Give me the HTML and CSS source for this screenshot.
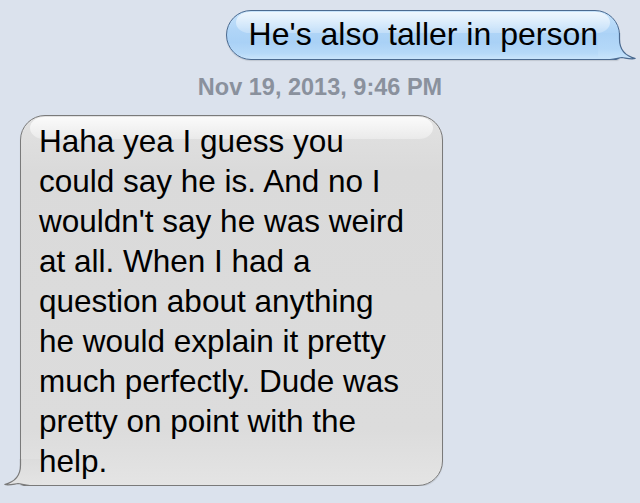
FILE: index.html
```html
<!DOCTYPE html>
<html>
<head>
    <title>Messages</title>
    <link rel="stylesheet" href="styles.css">
</head>
<body>

    <div class="thread">

        <div class="row row-out">
            <div class="bubble bubble-out">He's also taller in person<svg class="tail" width="40" height="28" viewBox="0 0 40 28">
                    <defs>
                        <linearGradient id="tailBlue" x1="0" y1="0" x2="0" y2="1">
                            <stop offset="0" stop-color="#abd2f6"/>
                            <stop offset="0.6" stop-color="#b4d8f8"/>
                            <stop offset="1" stop-color="#c9e4fb"/>
                        </linearGradient>
                    </defs>
                    <path class="tail-fill" fill="url(#tailBlue)" d="M0 0 H21.5 V6 C21.5 16 27 23 37.5 25.5 C32 26.5 28 25 24 24.5 C20 25 17 26.5 12 26.5 H0 Z"/>
                    <path class="tail-line" d="M21.5 0 V6 C21.5 16 27 23 37.5 25.5 C32 26.5 28 25 24 24.5 C20 25 17 26.5 12 26.5 H0"/>
                </svg></div>
        </div>

        <div class="stamp">Nov 19, 2013, 9:46 PM</div>

        <div class="row row-in">
            <div class="bubble bubble-in">Haha yea I guess you could say he is. And no I wouldn't say he was weird at all. When I had a question about anything he would explain it pretty much perfectly. Dude was pretty on point with the help.<svg class="tail" width="40" height="28" viewBox="0 0 40 28">
                    <defs>
                        <linearGradient id="tailGray" x1="0" y1="0" x2="0" y2="1">
                            <stop offset="0" stop-color="#dcdcdc"/>
                            <stop offset="1" stop-color="#e4e4e4"/>
                        </linearGradient>
                    </defs>
                    <path class="tail-fill" fill="url(#tailGray)" d="M0 0 H21.5 V6 C21.5 16 27 23 37.5 25.5 C32 26.5 28 25 24 24.5 C20 25 17 26.5 12 26.5 H0 Z"/>
                    <path class="tail-line" d="M21.5 0 V6 C21.5 16 27 23 37.5 25.5 C32 26.5 28 25 24 24.5 C20 25 17 26.5 12 26.5 H0"/>
                </svg></div>
        </div>

    </div>

</body>
</html>
```

FILE: styles.css
```css
body {
    margin: 0;
    background-color: #dbe2ed;
    font-family: "Liberation Sans", Arial, sans-serif;
}

.thread {
    display: flex;
    flex-direction: column;
    padding: 10px 20px 0;
}

.row {
    display: flex;
}
.row-out {
    justify-content: flex-end;
}
.row-in {
    justify-content: flex-start;
}

.bubble {
    position: relative;
    z-index: 0;
    border: 1px solid;
    border-radius: 25px;
    color: #000;
    box-shadow: 0 1px 1px rgba(0, 0, 0, 0.12);
}

/* glossy top highlight */
.bubble::before {
    content: "";
    position: absolute;
    z-index: -1;
    top: 1px;
    left: 9px;
    right: 9px;
    height: 21px;
    border-radius: 14px / 11px;
}

.tail {
    position: absolute;
    z-index: -1;
    bottom: -2px;
}
.tail-line {
    fill: none;
    stroke-width: 1.2;
}

/* sent - blue */
.bubble-out {
    font-size: 32px;
    line-height: 40px;
    padding: 3px 21px 5px 22px;
    border-color: #4b6a90;
    border-bottom-right-radius: 4px;
    background: linear-gradient(to bottom, #c7e3fb 0%, #b0d5f7 40%, #a9d1f6 65%, #b6d9f8 88%, #c9e4fb 100%);
}
.bubble-out::before {
    background: linear-gradient(to bottom, rgba(255, 255, 255, 0.7), rgba(255, 255, 255, 0.25));
}
.bubble-out .tail {
    right: -19px;
}
.bubble-out .tail-line {
    stroke: #4b6a90;
}

/* timestamp */
.stamp {
    margin: 14px 0 15px;
    text-align: center;
    font-size: 23.5px;
    line-height: 26px;
    font-weight: bold;
    color: #8a919d;
}

/* received - gray */
.bubble-in {
    box-sizing: border-box;
    width: 423px;
    font-size: 31.5px;
    line-height: 40px;
    padding: 5px 33px 4px 18px;
    border-color: #7a7a7a;
    border-bottom-left-radius: 4px;
    background: linear-gradient(to bottom, #e2e2e2 0%, #dadada 15%, #dcdcdc 85%, #e4e4e4 100%);
}
.bubble-in::before {
    height: 22px;
    background: linear-gradient(to bottom, rgba(255, 255, 255, 0.85), rgba(255, 255, 255, 0.35));
}
.bubble-in .tail {
    left: -19px;
    transform: scaleX(-1);
}
.bubble-in .tail-line {
    stroke: #7a7a7a;
}
```
